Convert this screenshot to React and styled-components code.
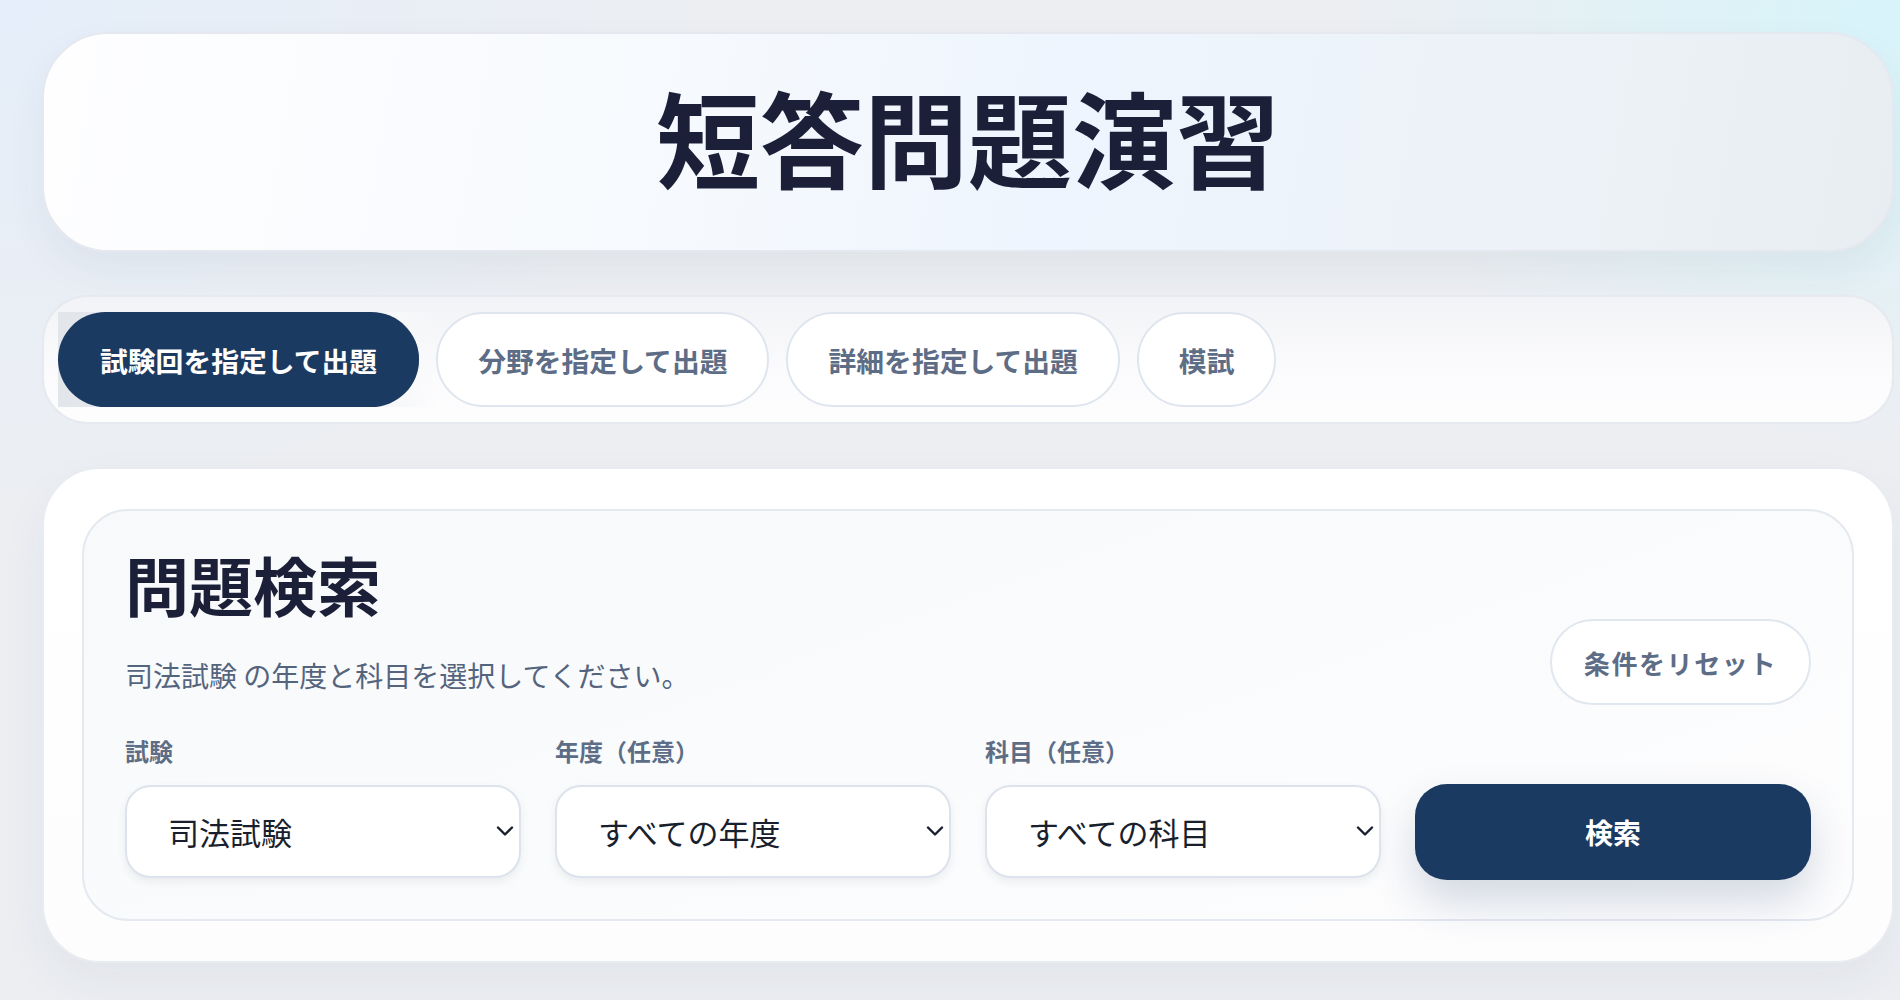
import React from 'react';
import styled, { createGlobalStyle } from 'styled-components';

const GlobalStyle = createGlobalStyle`
  html, body {
    margin: 0;
    padding: 0;
  }
  body {
    font-family: "Noto Sans CJK JP", "Noto Sans", sans-serif;
    background:
      radial-gradient(ellipse 520px 420px at 1880px 20px, rgba(214, 244, 250, 0.95), rgba(214, 244, 250, 0) 100%),
      radial-gradient(ellipse 700px 500px at 0px 0px, rgba(228, 238, 251, 0.9), rgba(228, 238, 251, 0) 100%),
      #eceef2;
    min-height: 1000px;
  }
`;

const Page = styled.div`
  padding: 32px 6px 37px 42px;
  display: flex;
  flex-direction: column;
  gap: 43px;
`;

const Hero = styled.header`
  height: 220px;
  box-sizing: border-box;
  border: 2px solid #e5e8ee;
  border-radius: 66px;
  background: linear-gradient(100deg, #fefeff 0%, #f6f9fd 35%, #eef5fe 55%, #ecf1f6 85%, #e8edf2 100%);
  box-shadow: 0 18px 40px rgba(40, 60, 90, 0.06);
  display: flex;
  align-items: center;
  justify-content: center;
`;

const HeroTitle = styled.h1`
  margin: 0 0 12px 0;
  font-family: "Noto Sans CJK JP", sans-serif;
  font-size: 104px;
  font-weight: 700;
  line-height: 1;
  color: #1b1f38;
`;

const TabBar = styled.nav`
  height: 129px;
  box-sizing: border-box;
  border: 2px solid #e6e9ef;
  border-radius: 46px;
  background: linear-gradient(180deg, #f2f3f6 0%, #fbfbfd 60%, #fdfdfe 100%);
  padding: 15px 14px;
  display: flex;
  align-items: center;
  gap: 17px;
`;

const Tab = styled.button`
  position: relative;
  height: 95px;
  box-sizing: border-box;
  padding: 0 40px;
  border-radius: 999px;
  border: 2px solid ${p => (p.$active ? '#1b3a62' : '#dfe5ee')};
  background: ${p => (p.$active ? '#1b3a62' : '#ffffff')};
  color: ${p => (p.$active ? '#ffffff' : '#5d6d86')};
  font-family: "Noto Sans CJK JP", sans-serif;
  font-size: 27.8px;
  font-weight: 700;
  cursor: pointer;
  z-index: 0;

  &::before {
    content: ${p => (p.$active ? "''" : 'none')};
    position: absolute;
    left: -2px;
    top: -2px;
    bottom: -2px;
    right: -20px;
    background: linear-gradient(90deg, #e2e5ea 0%, #eef0f3 60%, #f7f8fa 90%, rgba(250, 251, 252, 0) 100%);
    z-index: -2;
  }

  &::after {
    content: ${p => (p.$active ? "''" : 'none')};
    position: absolute;
    inset: -2px;
    border-radius: 999px;
    background: #1b3a62;
    z-index: -1;
  }
`;

const SearchCard = styled.section`
  box-sizing: border-box;
  border: 2px solid #e8ebf0;
  border-radius: 58px;
  background: linear-gradient(180deg, #ffffff 0%, #fdfdfe 100%);
  box-shadow: 0 20px 50px rgba(40, 60, 90, 0.05);
  padding: 40px 38px;
`;

const Panel = styled.div`
  box-sizing: border-box;
  border: 2px solid #e5e9f0;
  border-radius: 46px;
  background: linear-gradient(160deg, #f8f9fb 0%, #fafbfc 50%, #fdfdfe 100%);
  padding: 37px 41px 41px 41px;
`;

const PanelHead = styled.div`
  display: flex;
  justify-content: space-between;
  align-items: flex-end;
`;

const HeadText = styled.div`
  display: flex;
  flex-direction: column;
`;

const PanelTitle = styled.h2`
  margin: 0;
  font-size: 64px;
  font-weight: 700;
  line-height: 70px;
  color: #1b1f38;
`;

const Lead = styled.p`
  margin: 34px 0 0;
  font-size: 28px;
  line-height: 46px;
  color: #54647d;
`;

const ResetButton = styled.button`
  height: 86px;
  box-sizing: border-box;
  padding: 0 32px;
  border-radius: 999px;
  border: 2px solid #e1e7ef;
  background: #ffffff;
  color: #5d6d86;
  font-family: "Noto Sans CJK JP", sans-serif;
  font-size: 26px;
  font-weight: 700;
  letter-spacing: 1.6px;
  margin-bottom: -7px;
  cursor: pointer;
`;

const FormRow = styled.div`
  margin-top: 35px;
  display: grid;
  grid-template-columns: repeat(4, 1fr);
  column-gap: 34px;
  align-items: end;
`;

const Field = styled.label`
  display: flex;
  flex-direction: column;
  gap: 16px;
`;

const FieldLabel = styled.span`
  font-size: 24px;
  font-weight: 700;
  line-height: 36px;
  color: #5d6d86;
`;

const SelectWrap = styled.div`
  position: relative;
`;

const Select = styled.select`
  appearance: none;
  -webkit-appearance: none;
  width: 100%;
  height: 93px;
  box-sizing: border-box;
  border: 2px solid #dde3ec;
  border-radius: 26px;
  background: #ffffff;
  padding: 0 50px 0 41px;
  font-family: "Noto Sans CJK JP", sans-serif;
  font-size: 31px;
  color: #1a1f2e;
  box-shadow: 0 4px 8px rgba(40, 60, 90, 0.08);
  outline: none;
`;

const Chevron = styled.svg`
  position: absolute;
  right: 7px;
  top: 50%;
  margin-top: -6px;
  pointer-events: none;
`;

const SearchButton = styled.button`
  height: 96px;
  border: none;
  border-radius: 32px;
  background: #1b3a62;
  color: #ffffff;
  font-family: "Noto Sans CJK JP", sans-serif;
  font-size: 28px;
  font-weight: 700;
  box-shadow: 0 22px 44px rgba(27, 58, 98, 0.18);
  margin-bottom: -2px;
  cursor: pointer;
`;

const tabs = ['試験回を指定して出題', '分野を指定して出題', '詳細を指定して出題', '模試'];

const fields = [
  { label: '試験', value: '司法試験' },
  { label: '年度（任意）', value: 'すべての年度' },
  { label: '科目（任意）', value: 'すべての科目' },
];

const ChevronIcon = () => (
  <Chevron width="18" height="10" viewBox="0 0 18 10" fill="none">
    <path d="M2 1.5L9 8.5L16 1.5" stroke="#1a1f2e" strokeWidth="2.4" strokeLinecap="round" strokeLinejoin="round" />
  </Chevron>
);

export default function App() {
  return (
    <>
      <GlobalStyle />
      <Page>
        <Hero>
          <HeroTitle>短答問題演習</HeroTitle>
        </Hero>

        <TabBar>
          {tabs.map((t, i) => (
            <Tab key={t} $active={i === 0}>{t}</Tab>
          ))}
        </TabBar>

        <SearchCard>
          <Panel>
            <PanelHead>
              <HeadText>
                <PanelTitle>問題検索</PanelTitle>
                <Lead>司法試験 の年度と科目を選択してください。</Lead>
              </HeadText>
              <ResetButton>条件をリセット</ResetButton>
            </PanelHead>

            <FormRow>
              {fields.map(f => (
                <Field key={f.label}>
                  <FieldLabel>{f.label}</FieldLabel>
                  <SelectWrap>
                    <Select defaultValue={f.value}>
                      <option>{f.value}</option>
                    </Select>
                    <ChevronIcon />
                  </SelectWrap>
                </Field>
              ))}
              <SearchButton>検索</SearchButton>
            </FormRow>
          </Panel>
        </SearchCard>
      </Page>
    </>
  );
}
